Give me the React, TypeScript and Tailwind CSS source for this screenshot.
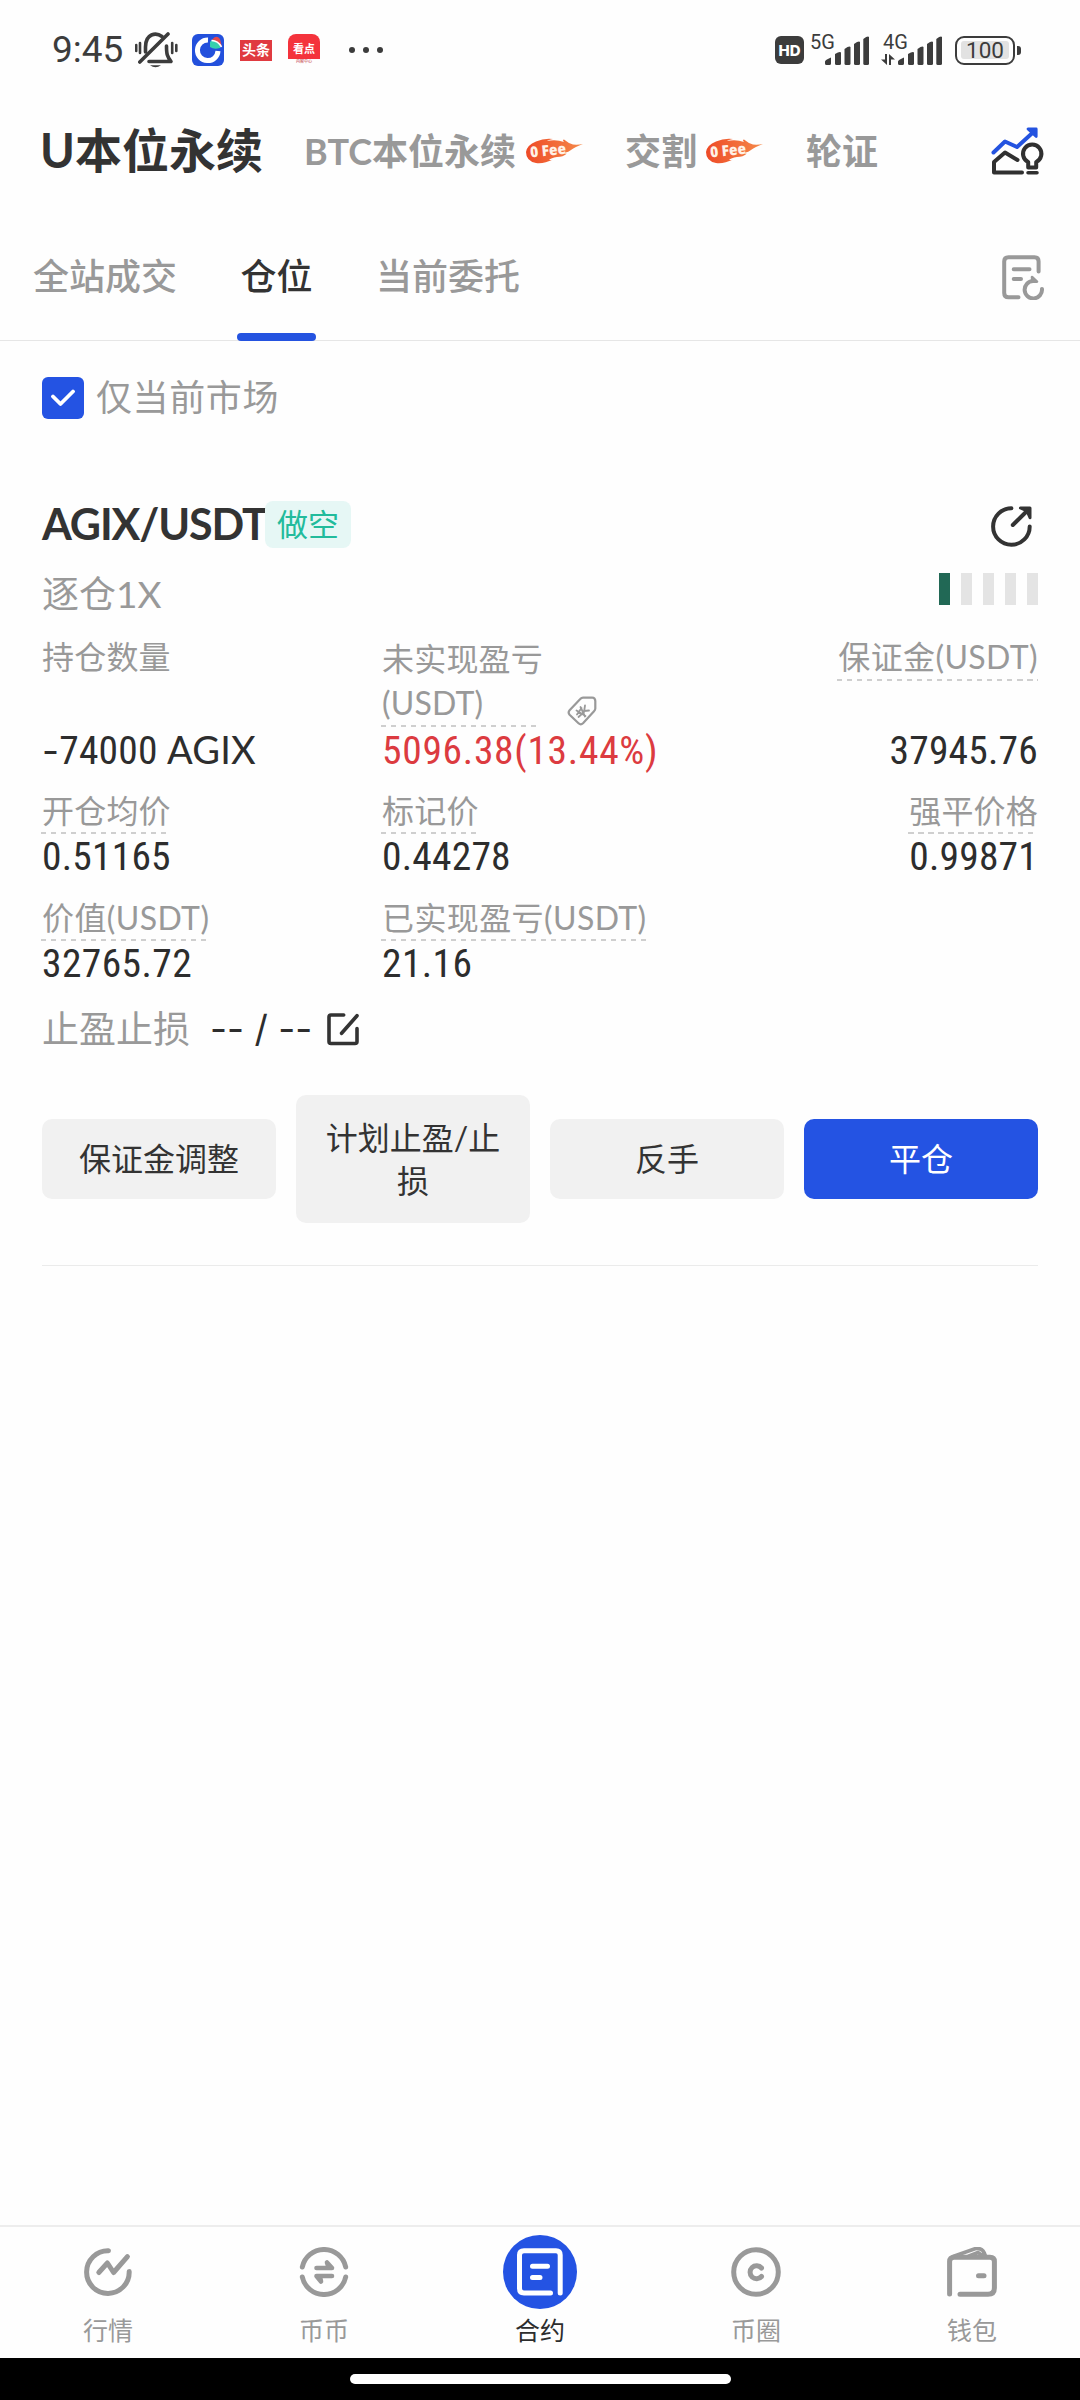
import type { ReactNode } from "react";

const CJK = "font-['Lato','Noto_Sans_CJK_SC',sans-serif]";
const DIN = "font-['Roboto','Noto_Sans_CJK_SC',sans-serif]";

function Signal() {
  return (
    <svg width="44" height="29" viewBox="0 0 44 29" fill="#3c3c3c">
      <path d="M0 29V25.500Q0 24 6 21.500V27.500Q6 29 4.500 29H1.500Q0 29 0 27.500Z" />
      <path d="M10 18Q15 15 16 16.500V27.500Q16 29 14.500 29H11.500Q10 29 10 27.500Z" />
      <path d="M19.500 13Q24.500 9.500 25.500 11V27.500Q25.500 29 24 29H21Q19.500 29 19.500 27.500Z" />
      <path d="M29 8Q34 4.500 35 6V27.500Q35 29 33.500 29H30.500Q29 29 29 27.500Z" />
      <path d="M38.300 3Q43 -0.500 44 1V27.500Q44 29 42.500 29H39.800Q38.300 29 38.300 27.500Z" />
    </svg>
  );
}

function StatusBar() {
  return (
    <div className="flex h-[100px] items-center text-[#3c3c3c]">
      <span className="ml-[52px] w-[83px] font-['Roboto',sans-serif] text-[37px] leading-[100px]">9:45</span>
      <svg width="43" height="36" viewBox="0 0 43 36" fill="none" stroke="#3c3c3c" strokeWidth="3.6" strokeLinecap="round" strokeLinejoin="round">
        <path d="M10.500 20V15C10.500 1.500 21 0 27 4.500" />
        <path d="M4.800 30L33 2" />
        <path d="M31.500 14C31.500 22 32 24 36 29.500H14" />
        <path d="M15 33.200H26Q20.500 37.500 15 33.200Z" fill="#3c3c3c" stroke="none" />
        <path d="M1.200 13V19M5 11V21M37.200 11V21M41.300 13V19" strokeWidth="2.600" />
      </svg>
      <svg className="ml-[14px]" width="32" height="32" viewBox="0 0 32 32">
        <rect width="32" height="32" rx="6" fill="#2350dc" />
        <path d="M16 6A10.300 10.300 0 1 0 26 17" fill="none" stroke="#fff" strokeWidth="5" />
        <path d="M18 8L21 5Q28 6 28 12V14Q22 16 18 13Z" fill="#35cfae" />
        <path d="M20 6Q24 0 28 5L30 13Q26 7 20 6Z" fill="#e5484d" />
        <path d="M19.500 6.500Q26 6.500 29.500 13" stroke="#fff" strokeWidth="1.600" fill="none" />
      </svg>
      <span className={`${CJK} ml-[16px] flex h-[21px] w-[32px] items-center justify-center bg-[#e03a40] text-[14px] font-bold leading-none text-white`}>头条</span>
      <span className={`${CJK} ml-[16px] flex h-[32px] w-[32px] flex-col items-center`}>
        <span className="flex h-[25px] w-[32px] items-center justify-center rounded-t-[8px] bg-[#f4333c] pt-[4px] text-[11px] font-bold leading-none text-white">看点</span>
        <span className="text-[4px] leading-[6px] text-[#c03036]">内容中心</span>
      </span>
      <span className="ml-[29px] flex gap-[8px]">
        <i className="size-[6px] rounded-full bg-[#3c3c3c]" />
        <i className="size-[6px] rounded-full bg-[#3c3c3c]" />
        <i className="size-[6px] rounded-full bg-[#3c3c3c]" />
      </span>
      <span className="ml-auto flex h-[28px] w-[29px] items-center justify-center rounded-[6px] bg-[#3c3c3c] font-['Inter',sans-serif] text-[15px] font-extrabold leading-none text-white">HD</span>
      <span className="relative ml-[21px] h-[29px] w-[44px]">
        <span className="absolute -left-[15px] -top-[3px] font-['Roboto',sans-serif] text-[20px] leading-[19px]">5G</span>
        <Signal />
      </span>
      <span className="relative ml-[29px] h-[29px] w-[44px]">
        <span className="absolute -left-[15px] -top-[3px] font-['Roboto',sans-serif] text-[20px] leading-[19px]">4G</span>
        <svg className="absolute -left-[17px] top-[18px]" width="14" height="11" viewBox="0 0 14 11" fill="#3c3c3c">
          <path d="M4 0H6V11L0 5.500H4ZM8 0L14 5.500H10V11H8Z" />
        </svg>
        <Signal />
      </span>
      <span className="ml-[13px] flex h-[29px] w-[60px] items-center justify-center rounded-[9px] border-[2.500px] border-[#3c3c3c]">
        <span className="flex h-[18px] w-[48px] items-center justify-center rounded-[3px] bg-[#e2e2e2] font-['Roboto',sans-serif] text-[22.500px] leading-none">100</span>
      </span>
      <i className="ml-[2px] mr-[59px] h-[9px] w-[4px] rounded-r-[3px] bg-[#3c3c3c]" />
    </div>
  );
}

function FeeBadge({ id }: { id: string }) {
  return (
    <svg width="57" height="26" viewBox="0 0 57 26">
      <defs>
        <linearGradient id={id} x1="0" x2="1" y1="0" y2="0">
          <stop offset="0" stopColor="#ee4a26" />
          <stop offset="1" stopColor="#f58a4a" />
        </linearGradient>
      </defs>
      <path d="M10 3.500Q18 0 27 1Q22 2 21 3Q30 1 38 4Q36 2 38 1.500Q42 5 47 6.500Q52 7 57 6Q49 9 45 12Q43 14 38 15Q40 16 41 15.500Q37 19 31 19Q25 20 23 22Q26 22 27 21.500Q18 26 10 25Q0 23 0 14Q1 7 10 3.500Z" fill={`url(#${id})`} />
      <text x="4.500" y="19.500" transform="rotate(-6 4 18)" fill="#fff1e6" fontFamily="Open Sans, sans-serif" fontWeight="800" fontSize="15" textLength="36" lengthAdjust="spacingAndGlyphs">0 Fee</text>
    </svg>
  );
}

function MarketTabs() {
  return (
    <div className={`${CJK} flex h-[102px] items-center text-[36px] font-bold leading-[60px] text-[#999999]`}>
      <span className="ml-[40px] w-[264px] pb-[3px] text-[47px] text-[#333333]">U本位永续</span>
      <span className="w-[222px] whitespace-nowrap">BTC本位永续</span>
      <FeeBadge id="fire-a" />
      <span className="ml-[42px] w-[81px]">交割</span>
      <FeeBadge id="fire-b" />
      <span className="ml-[43px]">轮证</span>
      <svg className="ml-auto mr-[35px]" width="54" height="48" viewBox="0 0 54 48" fill="none" strokeWidth="4" strokeLinecap="round" strokeLinejoin="round">
        <path d="M2.500 25.500L14 14.500L26 20L43 4.500" stroke="#2453e0" />
        <path d="M37 2H45.200V9.500Z" stroke="#2453e0" strokeWidth="2.800" fill="#2453e0" />
        <g stroke="#303030">
          <path d="M26.500 33L14 25.500L3 35V45.500H31" />
          <path d="M37.200 40.500V35A9.200 9.200 0 1 1 45.200 35V40.500Z" />
          <path d="M37 45.700H46" strokeWidth="3.500" />
        </g>
      </svg>
    </div>
  );
}

function SectionTabs() {
  return (
    <div className={`${CJK} flex h-[139px] border-b border-[#e6e6e6] text-[36px] font-medium leading-[148px] text-[#999999]`}>
      <span className="ml-[33px] w-[203px] whitespace-nowrap">全站成交</span>
      <span className="flex h-[139px] w-[80px] flex-col items-center text-[#333333]">
        <span className="h-[131px] pl-[1px]">仓位</span>
        <i className="h-[8px] w-[79px] rounded-full bg-[#2453e0]" />
      </span>
      <span className="ml-[60px] whitespace-nowrap">当前委托</span>
      <svg className="ml-auto mr-[35px] mt-[53px]" width="43" height="45" viewBox="0 0 43 45" fill="none" stroke="#999999" strokeWidth="4" strokeLinecap="round" strokeLinejoin="round">
        <path d="M36.600 16.500V6.500Q36.600 2.300 32.500 2.300H6.500Q2.200 2.300 2.200 6.500V38Q2.200 42.300 6.500 42.300H16.500" />
        <path d="M11.700 14.300H27.500M11.700 24H19" />
        <path d="M31 26A8.700 8.700 0 1 0 40 34" />
        <path d="M30 22L35 26.700H30.500Z" fill="#999999" strokeWidth="2.600" />
      </svg>
    </div>
  );
}

function Dashed({ children }: { children: ReactNode }) {
  return (
    <span className="flex w-fit flex-col">
      <span className="whitespace-nowrap">{children}</span>
      <i className="-ml-px h-[2px] bg-[repeating-linear-gradient(90deg,#cfcfcf_0_5.500px,transparent_5.500px_10px)]" />
    </span>
  );
}

function Num({ children, className = "" }: { children: ReactNode; className?: string }) {
  return <span className={`${DIN} whitespace-nowrap text-[39.500px] leading-[46px] font-stretch-75% text-[#2d2d2d] ${className}`}>{children}</span>;
}

function Stats() {
  return (
    <div className={`${CJK} text-[32px] leading-[42px] tracking-[0.200px] text-[#999999]`}>
      <div className="flex h-[138px] justify-between">
        <div className="flex w-[340px] flex-col justify-between">
          <span>持仓数量</span>
          <Num>
            <span className="font-['Inter',sans-serif] text-[37px]">-</span>74000 <span className="font-['Lato',sans-serif] text-[38px]">AGIX</span>
          </Num>
        </div>
        <div className="flex flex-1 flex-col justify-between">
          <span className="flex items-end">
            <span className="flex w-[156px] flex-col pt-px leading-[44px]">
              <span className="whitespace-nowrap">未实现盈亏</span>
              <span>(USDT)</span>
              <i className="-ml-px h-[2px] bg-[repeating-linear-gradient(90deg,#cfcfcf_0_5.500px,transparent_5.500px_10px)]" />
            </span>
            <svg className="mb-px ml-[29px]" width="30" height="30" viewBox="0 0 30 30" fill="none" stroke="#999999" strokeWidth="2.200" strokeLinejoin="round" strokeLinecap="round">
              <path d="M13.500 2.800Q14.500 1.600 16 1.600L25 1.500Q28.300 1.600 28.300 5V12.500Q28.300 14 27 15.300L16 27.300Q13.800 29.500 11.500 27.300L2.600 18.700Q0.700 16.500 2.600 14.300Z" />
              <path d="M9.500 14.500L18.500 20M13.500 11L18 20.500M18 9.500L17 16L11.500 21M17 15L22 14.500M10 18.500L14.500 12" strokeWidth="1.800" />
            </svg>
          </span>
          <Num className="tracking-[0.700px] text-[#dc3b40]">5096.38(13.44%)</Num>
        </div>
        <div className="flex flex-col items-end justify-between">
          <Dashed>
            <span className="block h-[43px] tracking-[0.400px]">保证金(USDT)</span>
          </Dashed>
          <Num>37945.76</Num>
        </div>
      </div>

      <div className="mt-[16px] flex justify-between">
        <div className="flex w-[340px] flex-col">
          <Dashed>开仓均价</Dashed>
          <Num>0.51165</Num>
        </div>
        <div className="flex flex-1 flex-col">
          <Dashed>标记价</Dashed>
          <Num>0.44278</Num>
        </div>
        <div className="flex flex-col items-end">
          <Dashed>强平价格</Dashed>
          <Num>0.99871</Num>
        </div>
      </div>

      <div className="mt-[17px] flex tracking-[0.400px]">
        <div className="flex w-[340px] flex-col">
          <Dashed>价值(USDT)</Dashed>
          <Num>32765.72</Num>
        </div>
        <div className="flex flex-col">
          <Dashed>已实现盈亏(USDT)</Dashed>
          <Num>21.16</Num>
        </div>
      </div>
    </div>
  );
}

function Position() {
  return (
    <section className={`${CJK} mx-[42px]`}>
      <div className="mt-[35px] flex h-[43px] items-center">
        <span className="flex size-[42px] items-center justify-center rounded-[6px] bg-[#2453e3]">
          <svg width="24" height="18" viewBox="0 0 24 18" fill="none" stroke="#fff" strokeWidth="3.800" strokeLinecap="round" strokeLinejoin="round">
            <path d="M2 7.500L9.500 15L22 2.500" />
          </svg>
        </span>
        <span className="ml-[12px] text-[36px] leading-[43px] tracking-[0.600px] text-[#999999]">仅当前市场</span>
      </div>

      <div className="mt-[82px] flex h-[47px] items-center">
        <span className="w-[223px] whitespace-nowrap pb-[2px] text-[43px] font-bold leading-[47px] tracking-[-1.100px] text-[#333333]">AGIX/USDT</span>
        <span className="flex h-[47px] w-[86px] items-center justify-center rounded-[8px] bg-[#e6f7f5] pb-px text-[31px] leading-none text-[#22bb9c]">做空</span>
        <svg className="ml-auto mr-[5px] mt-[4px]" width="42" height="42" viewBox="0 0 42 42" fill="none" stroke="#333333" strokeWidth="4" strokeLinecap="round" strokeLinejoin="round">
          <path d="M20.400 2.200A18.300 18.300 0 1 0 38.700 20.500" />
          <path d="M21.800 19L37 4" />
          <path d="M29.500 2H39V11.700L36 5Z" fill="#333333" strokeWidth="3" />
        </svg>
      </div>

      <div className="mt-[21px] flex h-[50px] justify-between">
        <span className="text-[37px] leading-[50px] text-[#999999]">逐仓1X</span>
        <span className="mt-[4px] flex h-[32px] gap-[11px]">
          <i className="w-[11px] bg-[#216855]" />
          <i className="w-[11px] bg-[#e4e4e4]" />
          <i className="w-[11px] bg-[#e4e4e4]" />
          <i className="w-[11px] bg-[#e4e4e4]" />
          <i className="w-[11px] bg-[#e4e4e4]" />
        </span>
      </div>

      <div className="mt-[17px]">
        <Stats />
      </div>

      <div className="mt-[19px] flex h-[46px] items-center">
        <span className="w-[168px] text-[37px] leading-[46px] text-[#999999]">止盈止损</span>
        <span className="w-[117px] whitespace-nowrap font-['Inter',sans-serif] text-[37px] leading-[46px] text-[#2d2d2d]">-- / --</span>
        <svg width="33" height="33" viewBox="0 0 33 33" fill="none" stroke="#333333" strokeWidth="3.600" strokeLinecap="round" strokeLinejoin="round">
          <path d="M16.700 2H4Q2 2 2 4V28.500Q2 30.500 4 30.500H28Q30 30.500 30 28.500V15.500" />
          <path d="M30 2.700L14.600 20.300" />
        </svg>
      </div>

      <div className="mt-[43px] grid grid-cols-4 items-center gap-[20px] text-[32px] leading-[43px] text-[#333333]">
        <button className="h-[80px] rounded-[10px] bg-[#f1f1f1] pb-[2px]">保证金调整</button>
        <button className="h-[128px] rounded-[10px] bg-[#f1f1f1] px-[28px] pb-px">计划止盈/止损</button>
        <button className="h-[80px] rounded-[10px] bg-[#f1f1f1] pb-[2px]">反手</button>
        <button className="h-[80px] rounded-[10px] bg-[#2453e3] pb-[2px] text-white">平仓</button>
      </div>
      <hr className="mt-[42px] border-t border-[#ebebeb]" />
    </section>
  );
}

function NavItem({ label, active, children }: { label: string; active?: boolean; children: ReactNode }) {
  return (
    <div className="flex flex-1 flex-col items-center">
      <span className="flex h-[74px] items-center justify-center">{children}</span>
      <span className={`mt-[5px] text-[25px] leading-[32px] ${active ? "text-[#2d2d2d]" : "text-[#999999]"}`}>{label}</span>
    </div>
  );
}

function BottomNav() {
  const line = { fill: "none", stroke: "#999999", strokeWidth: 5, strokeLinecap: "round", strokeLinejoin: "round" } as const;
  return (
    <nav className={`${CJK} flex h-[133px] border-t-2 border-[#ededed] pt-[8px]`}>
      <NavItem label="行情">
        <svg width="48" height="50" viewBox="0 0 48 50" {...line}>
          <path d="M24.500 3.800A21.300 21.300 0 1 0 45.200 24.500" />
          <path d="M14.800 25.500L23.400 16L29.600 25.500L43.400 9.700" />
        </svg>
      </NavItem>
      <NavItem label="币币">
        <svg width="50" height="50" viewBox="0 0 50 50" {...line}>
          <path d="M3.300 20A22.200 22.200 0 0 1 46.700 20" />
          <path d="M3.300 30A22.200 22.200 0 0 0 46.700 30" />
          <path d="M17.500 21H33L28 15.500L29.500 20" strokeWidth="4.600" />
          <path d="M33 29H17.500L22 34.500L21 30" strokeWidth="4.600" />
        </svg>
      </NavItem>
      <NavItem label="合约" active>
        <svg width="74" height="74" viewBox="0 0 74 74" {...line} stroke="#ffffff">
          <circle cx="37" cy="37" r="37" fill="#2453e3" stroke="none" />
          <path d="M47.500 58H21Q16.500 58 16.500 53.500V20Q16.500 15.700 21 15.700H53Q57.200 15.700 57.200 20V58" />
          <path d="M29.500 31.300H44.500M29.500 42.500H37" />
        </svg>
      </NavItem>
      <NavItem label="币圈">
        <svg width="50" height="50" viewBox="0 0 50 50" {...line}>
          <circle cx="25" cy="25" r="22.300" />
          <path d="M30.500 21A6.500 6.500 0 1 0 30.500 29.500" />
        </svg>
      </NavItem>
      <NavItem label="钱包">
        <svg width="50" height="50" viewBox="0 0 50 50" {...line}>
          <path d="M2.600 47V14.500Q2.600 10.300 7 10.300H43Q47.400 10.300 47.400 14.500V41Q47.400 47.300 41 47.300H13" />
          <path d="M6 9.500L28 1.800Q36 0 38.500 9M22 9L31 5.500L36 9" strokeWidth="3.600" />
          <path d="M31.500 28.700H37" />
        </svg>
      </NavItem>
    </nav>
  );
}

export default function App() {
  return (
    <div className="flex h-[2400px] w-[1080px] flex-col bg-[#fefefe]">
      <StatusBar />
      <MarketTabs />
      <SectionTabs />
      <Position />
      <div className="flex-1" />
      <BottomNav />
      <div className="flex h-[42px] justify-center bg-black pt-[16px]">
        <i className="h-[10px] w-[381px] rounded-full bg-white" />
      </div>
    </div>
  );
}
